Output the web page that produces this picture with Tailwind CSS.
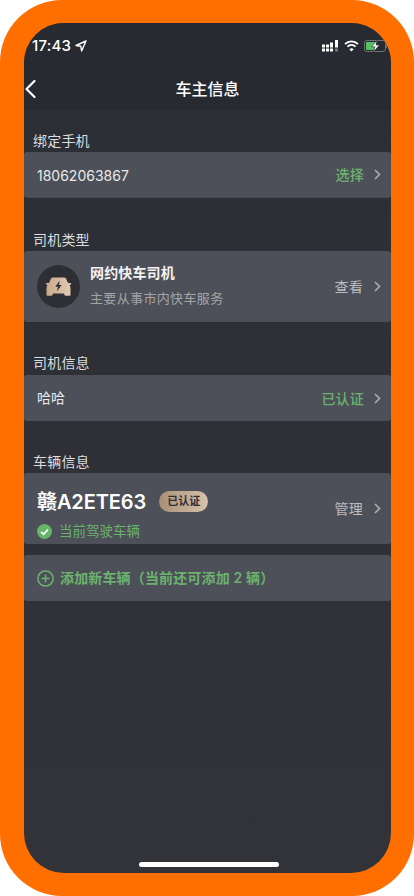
<!DOCTYPE html>
<html><head><meta charset="utf-8">
<script src="https://cdn.jsdelivr.net/npm/@tailwindcss/browser@4"></script>
</head>
<body class="bg-white">
<div class="w-[414px] h-[896px] bg-[#ff6f00] rounded-[62px] p-[24px] pb-[23px] pt-[23px] font-['Inter','Noto_Sans_CJK_SC',sans-serif]">
<div class="w-[367px] h-[850px] rounded-[40px] overflow-hidden flex flex-col bg-gradient-to-b from-[#2b2e35] to-[#323338] relative">
  <div class="h-[87px] bg-[#272a30] shrink-0 relative">
    <div class="flex items-center h-[20px] mt-[13px] pl-[8px] pr-[4px] justify-between absolute left-0 right-0 top-0">
      <div class="flex items-center gap-[4px]">
        <span class="text-white text-[15px] font-medium tracking-[0.2px]">17:43</span>
        <svg width="12" height="12" viewBox="0 0 12 12" fill="none"><path d="M11 1 L1 5.5 L5.8 6.2 L6.6 11 Z" stroke="#fff" stroke-width="1.4" stroke-linejoin="round"/></svg>
      </div>
      <div class="flex items-center gap-[5px]">
        <svg width="17" height="12" viewBox="0 0 17 12" fill="#fff">
          <rect x="0" y="8.5" width="3" height="3"/><rect x="4" y="8.5" width="3" height="3"/><rect x="8" y="8.5" width="3" height="3"/><rect x="13" y="8.5" width="3" height="3" fill="#777"/>
          <rect x="0" y="4.5" width="3" height="3"/><rect x="4" y="4.5" width="3" height="3"/><rect x="8" y="2.5" width="3" height="5"/><rect x="13" y="0" width="3" height="7.5"/>
        </svg>
        <svg width="15" height="12" viewBox="0 0 15 12" fill="none" stroke="#fff" stroke-width="1.7"><path d="M1 4.2 A9 9 0 0 1 14 4.2"/><path d="M3.4 6.8 A5.5 5.5 0 0 1 11.6 6.8"/><path d="M7.5 11.5 L5.4 9.2 A3 3 0 0 1 9.6 9.2 Z" fill="#fff" stroke="none"/></svg>
        <svg width="23" height="12" viewBox="0 0 23 12" fill="none">
          <rect x="0.5" y="0.5" width="21" height="11" rx="2.5" stroke="#6f7276"/>
          <rect x="2" y="2" width="10" height="8" rx="1" fill="#57c061"/>
          <path d="M13 0.2 L7.5 6.8 H11 L9.5 11.8 L15.5 5 H12 Z" fill="#fff" stroke="#272a30" stroke-width="0.6"/>
          <rect x="22" y="4" width="1" height="4" fill="#6f7276"/>
        </svg>
      </div>
    </div>
    <svg class="absolute left-0 top-[56px]" width="13" height="20" viewBox="0 0 13 20" fill="none"><path d="M10.5 2 L2.5 10 L10.5 18" stroke="#fff" stroke-width="2.2" stroke-linecap="round" stroke-linejoin="round"/></svg>
    <div class="absolute left-0 right-0 top-[53px] text-center text-white text-[16px] font-medium leading-[26px]">车主信息</div>
  </div>

  <div class="h-[42px] shrink-0 flex items-end pl-[9px] pb-[1px] text-[#dcdddf] text-[14px] leading-[20px] tracking-[0.2px]">绑定手机</div>
  <div class="h-[46px] shrink-0 bg-[#4d5058] rounded-[3px] flex items-center pl-[13px] pr-[10px] justify-between border-b border-[#44474e]">
    <span class="text-[#e8e9ea] text-[14px] translate-y-[1px]">18062063867</span>
    <div class="flex items-center gap-[10px]">
      <span class="text-[#6cb26f] text-[14px] font-medium tracking-[0.2px]">选择</span>
      <svg width="7" height="11" viewBox="0 0 7 11" fill="none"><path d="M1 1 L5.5 5.5 L1 10" stroke="#a9abaf" stroke-width="1.7"/></svg>
    </div>
  </div>

  <div class="h-[53px] shrink-0 flex items-end pl-[9px] pb-[1px] text-[#dcdddf] text-[14px] leading-[20px] tracking-[0.2px]">司机类型</div>
  <div class="h-[71px] shrink-0 bg-[#4d5058] rounded-[3px] flex items-center pl-[13px] pr-[10px] justify-between">
    <div class="flex items-center gap-[10px]">
      <div class="w-[43px] h-[43px] rounded-full bg-[#2d2f35] flex items-center justify-center">
        <svg width="27" height="19" viewBox="0 0 27 19">
          <defs><linearGradient id="c" x1="0" y1="0" x2="1" y2="0"><stop offset="0" stop-color="#c9a98a"/><stop offset="1" stop-color="#e2c9b0"/></linearGradient></defs>
          <path d="M6 1.5 Q6.5 0.5 8 0.5 H19 Q20.5 0.5 21 1.5 L23 6 H25.5 Q26.5 6 26 7.5 L24.5 8 Q25.5 9.5 25.5 11.5 V18 Q25.5 18.8 24.5 18.8 H20.5 Q19.5 18.8 19 16.5 H8 Q7.5 18.8 6.5 18.8 H2.5 Q1.5 18.8 1.5 18 V11.5 Q1.5 9.5 2.5 8 L1 7.5 Q0.5 6 1.5 6 H4 Z" fill="url(#c)"/>
          <path d="M14.8 3.5 L10.3 9.8 H13 L11.8 14.5 L16.6 8 H13.9 Z" fill="#2d2f35"/>
        </svg>
      </div>
      <div class="flex flex-col gap-[5px] translate-y-[-1px]">
        <span class="text-[#f3f3f4] text-[14px] font-semibold leading-[20px] tracking-[0.15px]">网约快车司机</span>
        <span class="text-[#a3a5a9] text-[13px] leading-[20px] tracking-[0.35px]">主要从事市内快车服务</span>
      </div>
    </div>
    <div class="flex items-center gap-[10px]">
      <span class="text-[#bcbdc0] text-[14px] tracking-[0.2px] translate-x-[-1px]">查看</span>
      <svg width="7" height="11" viewBox="0 0 7 11" fill="none"><path d="M1 1 L5.5 5.5 L1 10" stroke="#a9abaf" stroke-width="1.7"/></svg>
    </div>
  </div>

  <div class="h-[53px] shrink-0 flex items-end pl-[9px] pb-[2px] text-[#dcdddf] text-[14px] leading-[20px] tracking-[0.2px]">司机信息</div>
  <div class="h-[46px] shrink-0 bg-[#4d5058] rounded-[3px] flex items-center pl-[13px] pr-[10px] justify-between">
    <span class="text-[#e8e9ea] text-[14px] translate-y-[-1px]">哈哈</span>
    <div class="flex items-center gap-[10px]">
      <span class="text-[#6cb26f] text-[14px] font-medium tracking-[0.2px]">已认证</span>
      <svg width="7" height="11" viewBox="0 0 7 11" fill="none"><path d="M1 1 L5.5 5.5 L1 10" stroke="#a9abaf" stroke-width="1.7"/></svg>
    </div>
  </div>

  <div class="h-[52px] shrink-0 flex items-end pl-[9px] pb-[1px] text-[#dcdddf] text-[14px] leading-[20px] tracking-[0.2px]">车辆信息</div>
  <div class="h-[71px] shrink-0 bg-[#4d5058] rounded-[3px] flex items-center pl-[13px] pr-[10px] justify-between">
    <div class="flex flex-col translate-y-[6px]">
      <div class="flex items-center gap-[13px] h-[28px]">
        <span class="text-white text-[20px] font-semibold leading-[28px] tracking-[-0.1px]">赣A2ETE63</span>
        <span class="w-[49px] h-[21px] rounded-full bg-gradient-to-r from-[#a89078] to-[#d8c2ab] flex items-center justify-center text-[#2f2f34] text-[11px] font-semibold">已认证</span>
      </div>
      <div class="flex items-center gap-[7px] mt-[6px] h-[20px]">
        <svg width="15" height="15" viewBox="0 0 15 15"><circle cx="7.5" cy="7.5" r="7.5" fill="#64b46a"/><path d="M4 7.8 L6.6 10.2 L11 5.4" stroke="#fff" stroke-width="1.7" fill="none"/></svg>
        <span class="text-[#6cb26f] text-[13.5px] tracking-[0px]">当前驾驶车辆</span>
      </div>
    </div>
    <div class="flex items-center gap-[10px]">
      <span class="text-[#bcbdc0] text-[14px] tracking-[0.2px] translate-x-[-1px]">管理</span>
      <svg width="7" height="11" viewBox="0 0 7 11" fill="none"><path d="M1 1 L5.5 5.5 L1 10" stroke="#a9abaf" stroke-width="1.7"/></svg>
    </div>
  </div>

  <div class="h-[46px] mt-[11px] shrink-0 bg-[#4d5058] rounded-[3px] flex items-center pl-[13px] gap-[6px]">
    <svg width="17" height="17" viewBox="0 0 17 17" fill="none" stroke="#6cb26f" stroke-width="1.5"><circle cx="8.5" cy="8.5" r="7.6"/><path d="M8.5 4.5 V12.5 M4.5 8.5 H12.5"/></svg>
    <span class="text-[#6cb26f] text-[14px] font-semibold tracking-[0.15px] whitespace-pre translate-y-[-1px]">添加新车辆（当前还可添加 2 辆）</span>
  </div>

  <div class="absolute left-[115px] bottom-[6px] w-[140px] h-[5px] rounded-full bg-white"></div>
</div>
</div>
</body></html>
